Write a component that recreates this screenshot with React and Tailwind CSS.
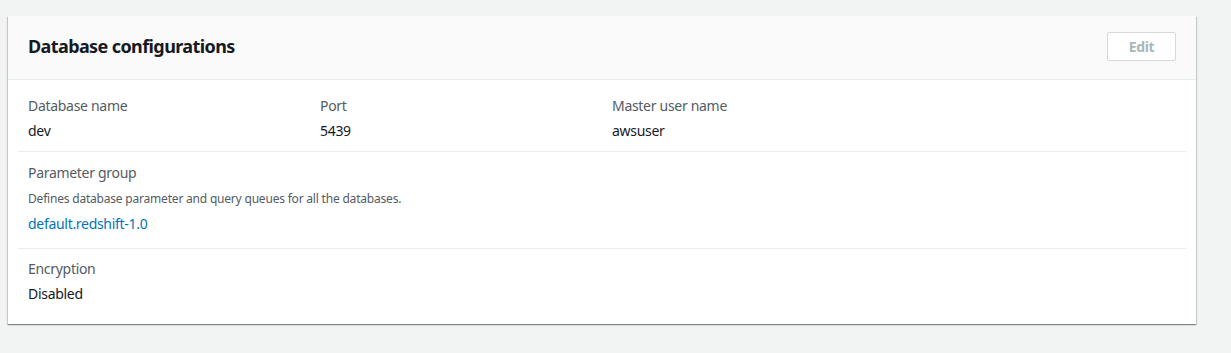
const Field = ({ label, children }) => (
  <div className="flex flex-col">
    <div className="text-[14px] leading-[22px] tracking-[-0.3px] text-[#545b64]">{label}</div>
    <div className="mt-[3px] text-[14px] leading-[22px] tracking-[-0.3px] text-[#16191f]">{children}</div>
  </div>
);

const App = () => {
  return (
    <div
      className="min-h-[353px] w-full bg-[#f2f3f3] pt-4 pl-2"
      style={{ fontFamily: '"Noto Sans", Roboto, Arial, sans-serif' }}
    >
      <div className="w-[1188px] bg-white shadow-[0_1px_1px_0_rgba(0,28,36,0.3),1px_1px_1px_0_rgba(0,28,36,0.15),-1px_1px_1px_0_rgba(0,28,36,0.15)]">
        {/* header */}
        <div className="flex h-[64px] items-center justify-between border-b border-[#eaeded] bg-[#fafafa] px-5 pb-[3px]">
          <h2 className="text-[18px] font-bold leading-[24px] tracking-[-0.6px] text-[#16191f]">Database configurations</h2>
          <button
            type="button"
            className="h-[29px] w-[69px] rounded-[2px] border border-[#d5dbdb] bg-white text-[14px] font-bold tracking-[-0.3px] text-[#aab7b8]"
          >
            Edit
          </button>
        </div>

        {/* body */}
        <div className="px-[10px]">
          <div className="grid grid-cols-[292px_292px_1fr] border-b border-[#eaeded] px-[10px] pt-[15px] pb-[9px]">
            <Field label="Database name">dev</Field>
            <Field label="Port">5439</Field>
            <Field label="Master user name">awsuser</Field>
          </div>

          <div className="border-b border-[#eaeded] px-[10px] pt-[10px] pb-[13px]">
            <div className="text-[14px] leading-[22px] tracking-[-0.3px] text-[#545b64]">Parameter group</div>
            <div className="mt-[5px] text-[12px] leading-[20px] tracking-[-0.2px] text-[#545b64]">
              Defines database parameter and query queues for all the databases.
            </div>
            <a href="#" className="mt-[4px] block text-[14px] leading-[22px] tracking-[-0.3px] text-[#0073bb]">
              default.redshift-1.0
            </a>
          </div>

          <div className="px-[10px] pt-[9px] pb-[19px]">
            <Field label="Encryption">Disabled</Field>
          </div>
        </div>
      </div>
    </div>
  );
};

export default App;
